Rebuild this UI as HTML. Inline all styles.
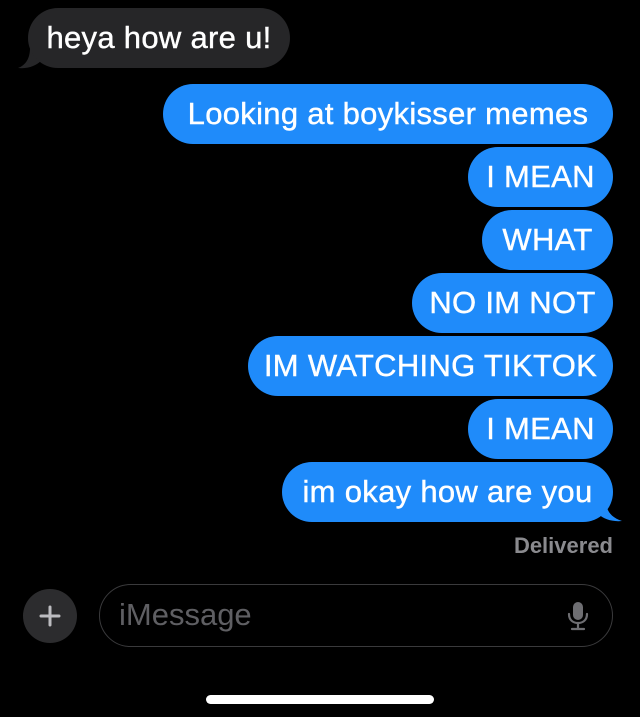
<!DOCTYPE html>
<html><head><meta charset="utf-8"><style>
body{margin:0;width:640px;height:717px;background:#000;position:relative;overflow:hidden;font-family:"Liberation Sans",sans-serif;}
.b{position:absolute;height:60px;border-radius:30px;color:#fff;font-size:31px;line-height:60px;box-sizing:border-box;padding:0;white-space:nowrap;text-align:center;letter-spacing:0.3px;-webkit-text-stroke:0.4px #fff}
.s{background:#1f8bfa;right:27px}
.r{background:#262628;left:28px;width:262px;top:8px}
</style></head><body>
<svg style="position:absolute;left:16px;top:48px" width="30" height="24"><path d="M14 0 C14 10 10 17 2 20 C12 21 20 18 26 12 Z" fill="#262628"/></svg>
<div class="b r">heya how are u!</div>
<div class="b s" style="top:84px;width:450px">Looking at boykisser memes</div>
<div class="b s" style="top:147px;width:145px">I MEAN</div>
<div class="b s" style="top:210px;width:131px">WHAT</div>
<div class="b s" style="top:273px;width:201px">NO IM NOT</div>
<div class="b s" style="top:336px;width:365px">IM WATCHING TIKTOK</div>
<div class="b s" style="top:399px;width:145px">I MEAN</div>
<svg style="position:absolute;left:596px;top:500px" width="30" height="24"><path d="M10 0 C10 10 14 17 26 21 C16 22 8 19 2 14 Z" fill="#1f8bfa"/></svg>
<div class="b s" style="top:462px;width:331px">im okay how are you</div>
<div style="position:absolute;right:27px;top:533px;color:#8a8a8e;font-weight:bold;font-size:22px">Delivered</div>
<div style="position:absolute;left:23px;top:589px;width:54px;height:54px;border-radius:50%;background:#2c2c2e"></div>
<svg style="position:absolute;left:38px;top:604px" width="24" height="24"><path d="M12 3V21M3 12H21" stroke="#bcbcc0" stroke-width="3" stroke-linecap="round"/></svg>
<div style="position:absolute;left:99px;top:584px;width:514px;height:63px;border:1.5px solid #3a3a3c;border-radius:32px;box-sizing:border-box"></div>
<div style="position:absolute;left:119px;top:597px;font-size:31px;color:#5f5f63">iMessage</div>
<svg style="position:absolute;left:566px;top:601px" width="24" height="30"><rect x="7" y="1" width="10" height="18" rx="5" fill="#6e6e72"/><path d="M3 13C3 19 7 22 12 22C17 22 21 19 21 13M12 22V28M6 28H18" stroke="#6e6e72" stroke-width="2.2" fill="none" stroke-linecap="round"/></svg>
<div style="position:absolute;left:206px;top:695px;width:228px;height:9px;border-radius:5px;background:#fff"></div>
</body></html>
